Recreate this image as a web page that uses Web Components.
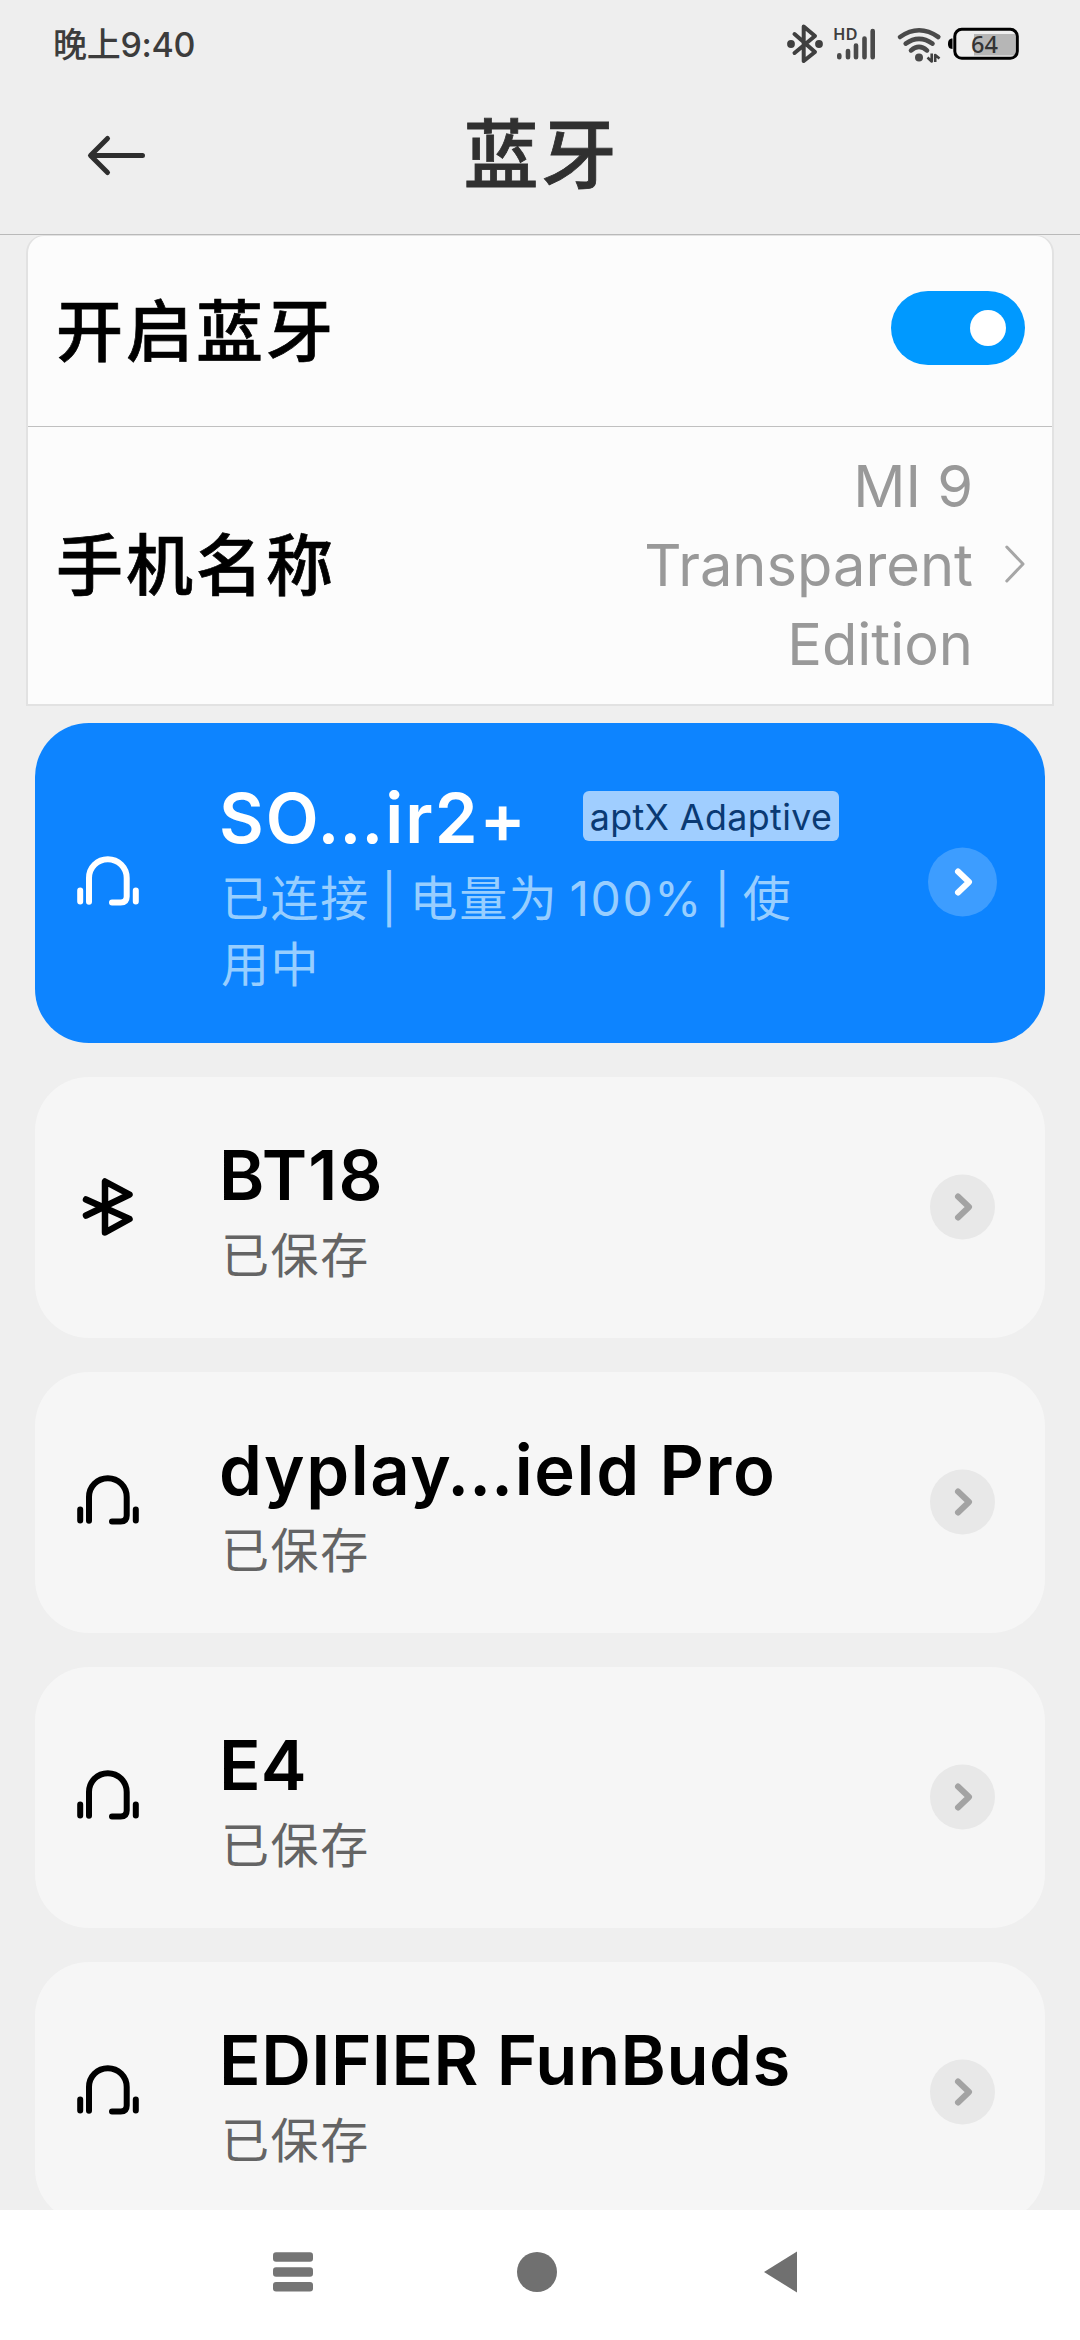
<!DOCTYPE html>
<html lang="zh-CN">
<head>
<meta charset="utf-8">
<title>蓝牙</title>
<style>
  html, body { margin: 0; padding: 0; }
  body {
    width: 1080px; height: 2340px; overflow: hidden; background: #efefef;
    font-family: Inter, "Noto Sans CJK SC", sans-serif; color: #000;
  }
</style>
</head>
<body>
<bt-screen>
  <status-bar slot="top" time="晚上9:40" battery="64"></status-bar>
  <title-bar slot="top">蓝牙</title-bar>
  <setting-group>
    <setting-row label="开启蓝牙"><toggle-switch></toggle-switch></setting-row>
    <setting-row label="手机名称" tall>
      <value-text>MI 9<br>Transparent<br>Edition</value-text>
      <row-arrow></row-arrow>
    </setting-row>
  </setting-group>
  <device-card active icon="headset">
    <span slot="name" style="letter-spacing:2px">SO…ir2+</span>
    <codec-badge slot="badge">aptX Adaptive</codec-badge>
    已连接 | 电量为 100% | 使用中
  </device-card>
  <device-card icon="bluetooth"><span slot="name" style="letter-spacing:1.2px">BT18</span>已保存</device-card>
  <device-card icon="headset"><span slot="name" style="letter-spacing:1.6px">dyplay…ield Pro</span>已保存</device-card>
  <device-card icon="headset"><span slot="name">E4</span>已保存</device-card>
  <device-card icon="headset"><span slot="name" style="letter-spacing:.5px">EDIFIER FunBuds</span>已保存</device-card>
  <nav-bar slot="bottom"></nav-bar>
</bt-screen>

<script>
const define = (name, render) => customElements.define(name, class extends HTMLElement {
  connectedCallback() {
    if (this.shadowRoot) return;
    this.attachShadow({ mode: 'open' }).innerHTML = render(this);
  }
});

define('bt-screen', () => `
  <style>
    :host { display: flex; flex-direction: column; width: 1080px; height: 2340px; overflow: hidden; }
    .top { background: #eee; border-bottom: 1px solid #b9b9b9; }
    main { flex: 1; min-height: 0; overflow: hidden; display: flex; flex-direction: column; }
  </style>
  <div class="top"><slot name="top"></slot></div>
  <main><slot></slot></main>
  <slot name="bottom"></slot>`);

define('status-bar', el => `
  <style>
    :host { display: flex; justify-content: space-between; height: 88px; color: #3c3c3c; }
    .time { padding-left: 53px; font-size: 34px; line-height: 90px; font-weight: 500; letter-spacing: -.3px; }
    svg { display: block; width: 320px; height: 90px; font-family: "Noto Sans", sans-serif; }
  </style>
  <div class="time">${el.getAttribute('time')}</div>
  <svg viewBox="0 0 320 90" fill="none" stroke="#3f3f3f" stroke-linecap="round" stroke-linejoin="round">
    <path stroke-width="4" d="M34.5 34 L55 52 L43.7 61 V26.5 L55 36 L34.5 53"/>
    <g fill="#3f3f3f" stroke="none"><circle cx="31" cy="44" r="3.9"/><circle cx="59" cy="44" r="3.9"/></g>
    <text x="73" y="40.3" font-size="16.5" font-weight="600" fill="#3f3f3f" stroke="none">HD</text>
    <path stroke="#4a4a4a" stroke-width="4.6" d="M79.3 55.3V57.2M88 51V57.2M96 45.5V57.2M104.5 38.5V57.2M112.7 31V57.2"/>
    <g stroke="#4a4a4a" stroke-width="4.6">
      <path d="M140 37 Q159 23.5 178.3 37"/>
      <path d="M145.7 43.6 Q159 34 172.5 43.6"/>
      <path d="M151 50.4 Q159 43.5 167 50.4"/>
    </g>
    <circle cx="159" cy="57.5" r="4" fill="#4a4a4a" stroke="none"/>
    <path stroke-width="2.6" stroke-linecap="butt" d="M171.7 53.5V61.5L167.5 57.5M175.2 62V55L179.5 58.5"/>
    <rect x="214" y="34" width="41.5" height="21.5" fill="#b6b6b6" stroke="none"/>
    <rect x="194.8" y="29.3" width="62.5" height="29" rx="7" stroke="#000" stroke-width="3"/>
    <path d="M192.5 38.5V49C188.5 49 188 46 188 43.8C188 41 189 38.5 192.5 38.5Z" fill="#000" stroke="none"/>
    <text x="211" y="52.8" font-size="23.5" font-weight="500" fill="#333" stroke="none">${el.getAttribute('battery')}</text>
  </svg>`);

define('title-bar', () => `
  <style>
    :host { display: grid; grid-template-columns: 240px 1fr 240px; align-items: center; height: 146px; }
    svg { display: block; margin: -12px 0 0 80px; }
    h1 { margin: -12px 0 0; text-align: center; font-size: 75px; line-height: 100px; font-weight: 500;
      -webkit-text-stroke: .8px #303030; letter-spacing: 3px; text-indent: 3px; color: #303030; }
  </style>
  <svg width="72" height="50" viewBox="0 0 72 50" fill="none" stroke="#2e2e2e" stroke-width="5" stroke-linecap="round" stroke-linejoin="round">
    <path d="M62.5 25.5H11M27.5 8.5L10.5 25.5L27.5 42.5"/></svg>
  <h1><slot></slot></h1>`);

define('setting-group', () => `
  <style>
    :host { display: block; flex: none; box-sizing: border-box; width: 1028px; height: 471px; margin: 0 26px;
      background: #fcfcfc; border: 2px solid #e2e2e2; border-top-width: 1px; border-radius: 18px 18px 0 0; }
  </style><slot></slot>`);

define('setting-row', el => `
  <style>
    :host { display: flex; align-items: center; justify-content: space-between; box-sizing: border-box;
      height: 191px; padding: 0 27px 0 28px; border-bottom: 1px solid #c0c0c0; }
    :host([tall]) { height: 277px; border-bottom: 0; }
    .label { margin-top: 1px; font-size: 67px; line-height: 90px; font-weight: 500; letter-spacing: 3px; -webkit-text-stroke: .7px #000; }
    .end { display: flex; align-items: center; gap: 32px; }
  </style>
  <div class="label">${el.getAttribute('label')}</div>
  <div class="end"><slot></slot></div>`);

define('toggle-switch', () => `
  <style>
    :host { display: flex; align-items: center; justify-content: flex-end; box-sizing: border-box;
      width: 134px; height: 74px; padding-right: 19px; border-radius: 38px; background: #0099ff; margin-top: -6px; }
    i { width: 36px; height: 36px; border-radius: 50%; background: #fff; }
  </style><i></i>`);

define('value-text', () => `
  <style>
    :host { display: block; text-align: right; font-size: 57.8px; line-height: 79px; color: #999; margin-top: -1px; }
  </style><slot></slot>`);

define('row-arrow', () => `
  <style>:host { display: block; margin-top: -4px; } svg { display: block; }</style>
  <svg width="20" height="38" viewBox="0 0 20 38" fill="none" stroke="#a6a6a6" stroke-width="3" stroke-linecap="round" stroke-linejoin="round">
    <path d="M1.8 2L18 19L1.8 36"/></svg>`);

define('codec-badge', () => `
  <style>
    :host { display: block; width: 256px; height: 50px; box-sizing: border-box; text-align: center; margin-top: -3px;
      border-radius: 6px; background: #a0ceff; color: #0a3a73; font-size: 35.8px; line-height: 52px; letter-spacing: .4px; white-space: nowrap; }
  </style><slot></slot>`);

const ICONS = {
  headset: `<path d="M15 48.8V25A18.85 18.85 0 0 1 52.7 25V43.5Q52.7 49.5 46.7 49.5H38M6.2 37.5V48.5M61.8 37.5V48.5"/>`,
  bluetooth: `<path stroke-width="6.5" d="M12 54.5L55.5 33.5L31 20.5V71.5L55.5 58L12 38.5"/>`
};

define('device-card', el => {
  const active = el.hasAttribute('active');
  const icon = el.getAttribute('icon');
  const h = icon === 'headset' ? 60 : 92;
  return `
  <style>
    :host { display: flex; align-items: center; flex: none; box-sizing: border-box; width: 1010px; height: 261px;
      margin: 0 35px 34px; border-radius: 54px; background: #f6f6f6; --sub: #646464; }
    :host([active]) { height: 320px; margin-top: 17px; background: #0d84ff; color: #fff; --sub: #97ceff; }
    .icon { flex: none; width: 182px; margin-top: -1px; }
    .icon svg { display: block; margin-left: 39px; }
    .body { flex: none; width: 625px; margin-top: -1px; }
    :host([active]) .body { margin-top: 0; }
    .head { display: flex; align-items: center; height: 98px; }
    .name { flex: none; box-sizing: border-box; font-size: 68.8px; line-height: 98px; padding: 1px 0 0 2px; font-weight: 560; white-space: nowrap; }
    :host([active]) .name { width: 366px; }
    .sub { width: 590px; font-size: 48px; line-height: 66px; letter-spacing: 1.6px; word-spacing: -4px; color: var(--sub); padding-left: 4px; }
    .go { margin: -2px 0 0 auto; padding-right: 48px; }
    .go svg { display: block; }
  </style>
  <div class="icon"><svg width="68" height="${h}" viewBox="0 0 68 ${h}"
    fill="none" stroke="${active ? '#fff' : '#000'}" stroke-width="6" stroke-linecap="round" stroke-linejoin="round">${ICONS[icon]}</svg></div>
  <div class="body">
    <div class="head"><div class="name"><slot name="name"></slot></div><slot name="badge"></slot></div>
    <div class="sub"><slot></slot></div>
  </div>
  <div class="go"><svg width="69" height="70" viewBox="0 0 69 70" fill="none">
    <circle cx="34.5" cy="35" r="${active ? 34.5 : 32.5}" fill="${active ? '#3d9dff' : '#e8e8e8'}"/>
    <path d="M30 24.5L41 35L30 45.5" stroke="${active ? '#fff' : '#a3a3a3'}" stroke-width="6" stroke-linecap="round" stroke-linejoin="round"/></svg></div>`;
});

define('nav-bar', () => `
  <style>
    :host { display: flex; align-items: center; flex: none; box-sizing: border-box; height: 130px; padding: 0 283px 6px 273px;
      justify-content: space-between; background: #fff; }
    svg { display: block; }
    .home { margin-right: 4px; }
  </style>
  <svg width="40" height="40" fill="#757575"><rect width="40" height="9.5" y=".3" rx="3"/><rect y="15.3" width="40" height="9.5" rx="3"/><rect y="30" width="40" height="9.5" rx="3"/></svg>
  <svg class="home" width="40" height="40"><circle cx="20" cy="20" r="20" fill="#707070"/></svg>
  <svg width="33" height="42"><path d="M0 21L33 .5V41.5Z" fill="#707070"/></svg>`);
</script>
</body>
</html>
